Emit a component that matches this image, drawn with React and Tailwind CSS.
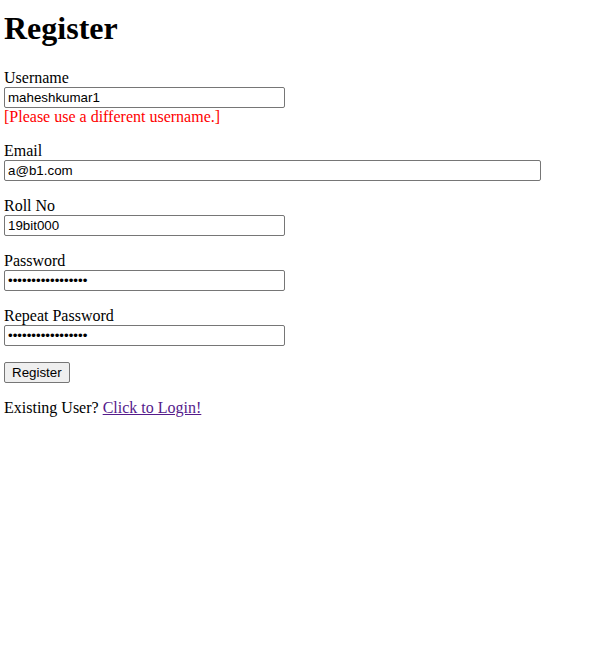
import React from 'react';

const inputCls =
  "block h-[21px] border border-[#767676] rounded-[2px] px-[3px] py-[1px] text-[13.33px] leading-[17px] text-black bg-white font-['Liberation_Sans',Arial,sans-serif] outline-none";

const App = () => {
  return (
    <div className="min-h-[663px] bg-white px-1 pt-[10px] font-['Liberation_Serif','Times_New_Roman',serif] text-base text-black">
      <h1 className="text-[32px] font-bold leading-[37px] mb-[21px]">Register</h1>

      <form onSubmit={(e) => e.preventDefault()}>
        {/* Username */}
        <label className="block leading-[19px]">Username</label>
        <input type="text" defaultValue="maheshkumar1" className={`${inputCls} w-[281px]`} />
        <div className="leading-[18px] text-[#ff0000] mb-4">[Please use a different username.]</div>

        {/* Email */}
        <label className="block leading-[18px]">Email</label>
        <input type="email" defaultValue="a@b1.com" className={`${inputCls} w-[537px]`} />
        <div className="h-4" />

        {/* Roll No */}
        <label className="block leading-[18px]">Roll No</label>
        <input type="text" defaultValue="19bit000" className={`${inputCls} w-[281px]`} />
        <div className="h-4" />

        {/* Password */}
        <label className="block leading-[18px]">Password</label>
        <input type="password" defaultValue="aaaaaaaaaaaaaaaaa" className={`${inputCls} w-[281px]`} />
        <div className="h-4" />

        {/* Repeat Password */}
        <label className="block leading-[18px]">Repeat Password</label>
        <input type="password" defaultValue="aaaaaaaaaaaaaaaaa" className={`${inputCls} w-[281px]`} />
        <div className="h-4" />

        <button
          type="submit"
          className="block h-[21px] px-[7px] border border-[#767676] rounded-[2px] bg-[#efefef] text-[13.33px] leading-[17px] text-black font-['Liberation_Sans',Arial,sans-serif]"
        >
          Register
        </button>
        <div className="h-4" />
      </form>

      <p className="leading-[18px]">
        Existing User?{' '}
        <a href="#" className="text-[#551a8b] underline">Click to Login!</a>
      </p>
    </div>
  );
};

export default App;
